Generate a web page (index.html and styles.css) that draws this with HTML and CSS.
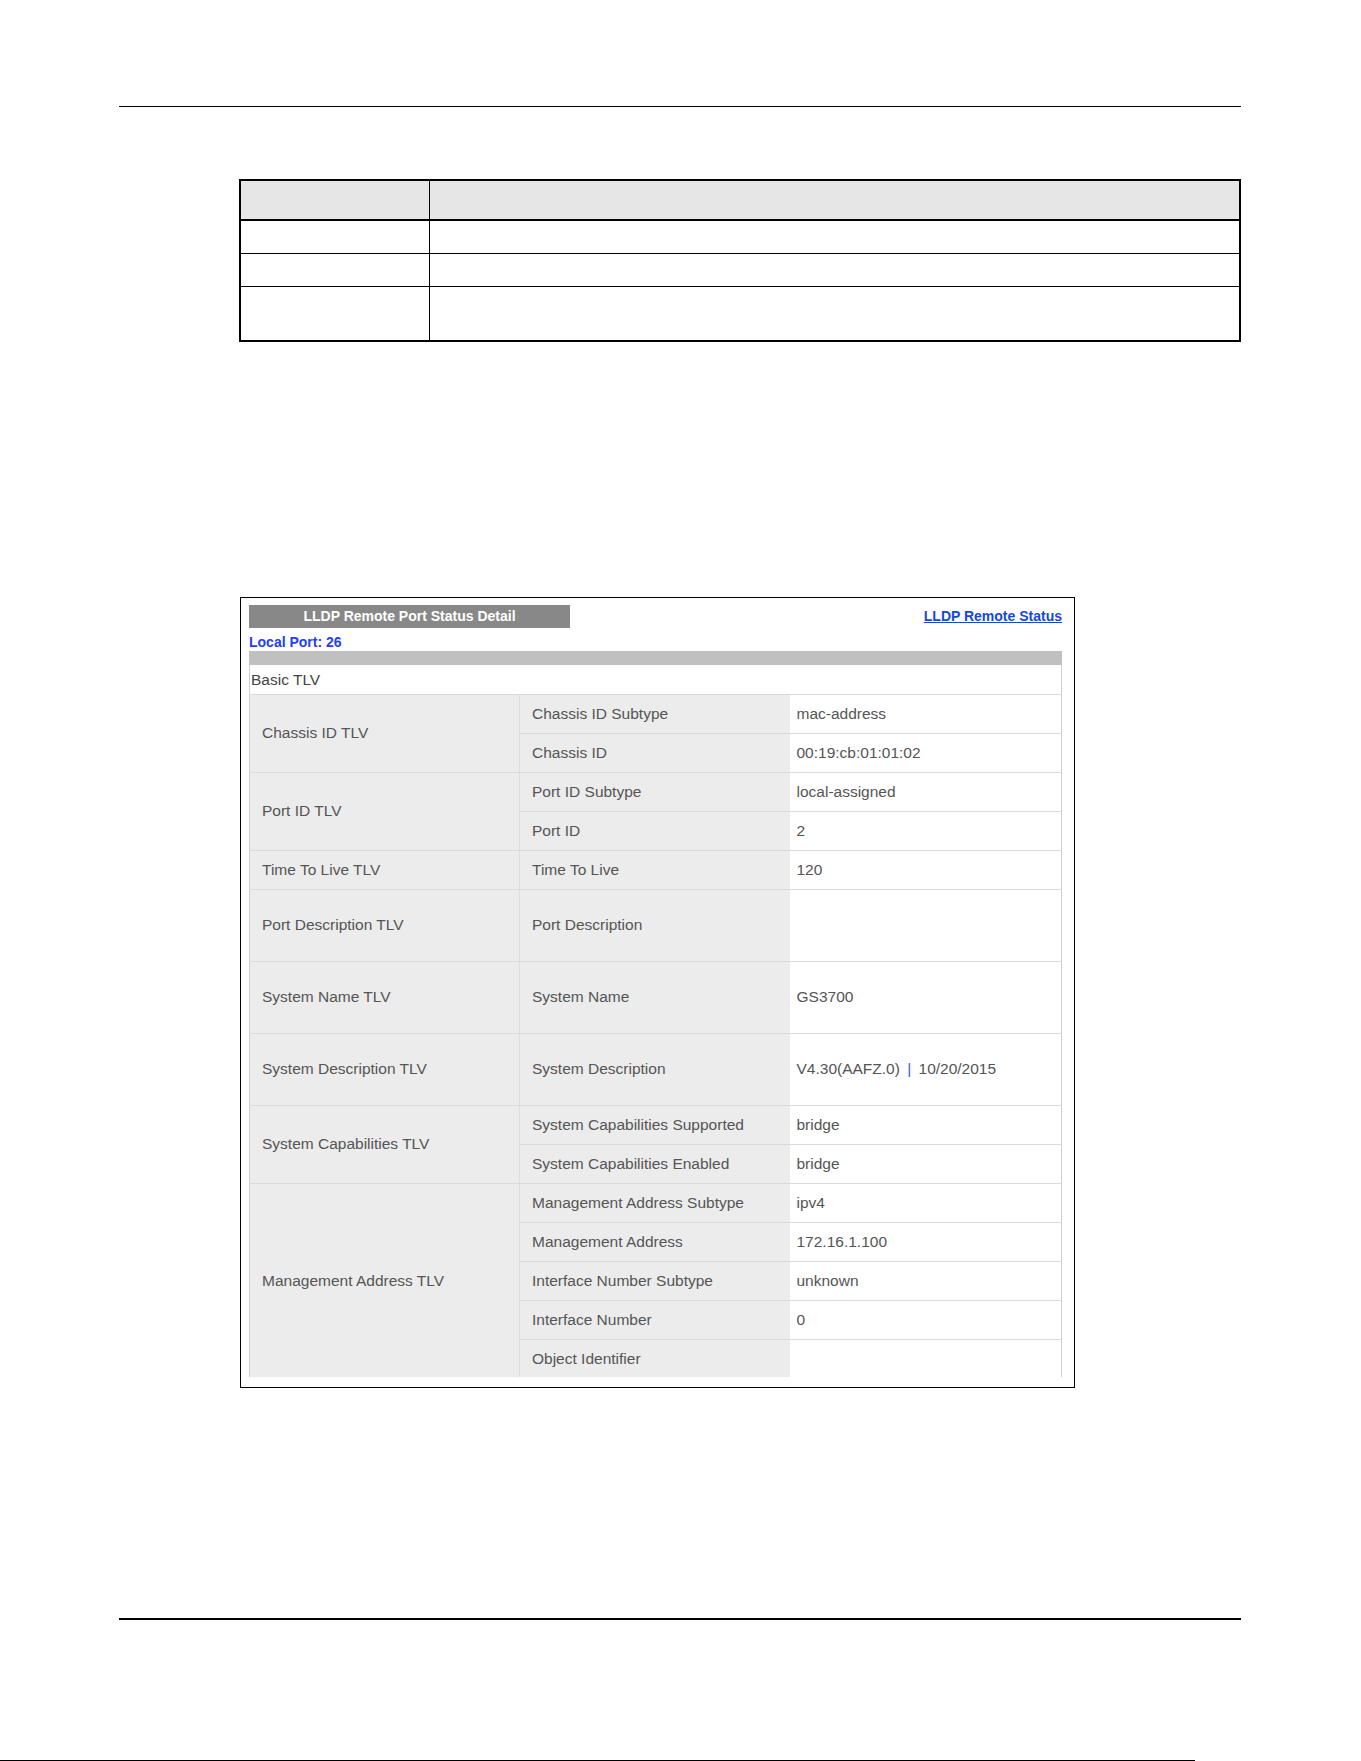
FILE: index.html
```html
<!DOCTYPE html>
<html lang="en">
<head>
    <meta charset="UTF-8">
    <meta name="viewport" content="width=device-width, initial-scale=1.0">
    <title>LLDP Remote Port Status Detail</title>
    <link rel="stylesheet" href="styles.css">
</head>
<body>
    <div class="page">
        <div class="rule rule-top"></div>

        <table class="desc">
            <thead>
                <tr><th class="desc-label"></th><th></th></tr>
            </thead>
            <tbody>
                <tr class="row-short"><td></td><td></td></tr>
                <tr class="row-short"><td></td><td></td></tr>
                <tr class="row-tall"><td></td><td></td></tr>
            </tbody>
        </table>

        <div class="shot">
            <div class="shot-head">
                <div class="title-bar">LLDP Remote Port Status Detail</div>
                <a class="back-link" href="#">LLDP Remote Status</a>
            </div>
            <div class="local-port">Local Port: 26</div>
            <div class="band"></div>

            <div class="tlv-wrap">
                <table class="tlv">
                    <colgroup>
                        <col class="col-group">
                        <col class="col-name">
                        <col>
                    </colgroup>
                    <tr class="tlv-title"><td colspan="3">Basic TLV</td></tr>

                    <tr><td class="grp" rowspan="2">Chassis ID TLV</td><td class="name">Chassis ID Subtype</td><td class="val">mac-address</td></tr>
                    <tr><td class="name">Chassis ID</td><td class="val">00:19:cb:01:01:02</td></tr>

                    <tr><td class="grp" rowspan="2">Port ID TLV</td><td class="name">Port ID Subtype</td><td class="val">local-assigned</td></tr>
                    <tr><td class="name">Port ID</td><td class="val">2</td></tr>

                    <tr><td class="grp">Time To Live TLV</td><td class="name">Time To Live</td><td class="val">120</td></tr>

                    <tr class="tall"><td class="grp">Port Description TLV</td><td class="name">Port Description</td><td class="val"></td></tr>
                    <tr class="tall"><td class="grp">System Name TLV</td><td class="name">System Name</td><td class="val">GS3700</td></tr>
                    <tr class="tall"><td class="grp">System Description TLV</td><td class="name">System Description</td><td class="val">V4.30(AAFZ.0) <span class="sep">|</span> 10/20/2015</td></tr>

                    <tr><td class="grp" rowspan="2">System Capabilities TLV</td><td class="name">System Capabilities Supported</td><td class="val">bridge</td></tr>
                    <tr><td class="name">System Capabilities Enabled</td><td class="val">bridge</td></tr>

                    <tr><td class="grp" rowspan="5">Management Address TLV</td><td class="name">Management Address Subtype</td><td class="val">ipv4</td></tr>
                    <tr><td class="name">Management Address</td><td class="val">172.16.1.100</td></tr>
                    <tr><td class="name">Interface Number Subtype</td><td class="val">unknown</td></tr>
                    <tr><td class="name">Interface Number</td><td class="val">0</td></tr>
                    <tr><td class="name">Object Identifier</td><td class="val"></td></tr>
                </table>
            </div>
        </div>

        <div class="rule rule-bottom"></div>

        <div class="foot-line"></div>
    </div>
</body>
</html>
```

FILE: styles.css
```css
* {
    margin: 0;
    padding: 0;
    box-sizing: border-box;
}

html, body {
    width: 100%;
    height: 100%;
    background: #fff;
    overflow: hidden;
}

body {
    font-family: "Liberation Sans", Arial, sans-serif;
    color: #000;
}

.page {
    position: relative;
    width: 1361px;
    height: 1761px;
    padding-top: 106px;
}

/* page rules */
.rule {
    background: #000;
    margin-left: 119px;
    width: 1122px;
}

.rule-top {
    height: 1px;
}

.rule-bottom {
    height: 2px;
    margin-top: 230px;
}

/* empty description table */
.desc {
    margin: 72px 0 0 239px;
    width: 1002px;
    border-collapse: collapse;
    border: 2px solid #000;
}

.desc th {
    height: 40px;
    background: #e6e6e6;
    border-bottom: 2px solid #000;
    border-right: 1px solid #000;
}

.desc td {
    border-top: 1px solid #000;
    border-right: 1px solid #000;
}

.desc .desc-label {
    width: 189px;
}

.desc .row-short td {
    height: 33px;
}

.desc .row-tall td {
    height: 55px;
}

/* web configurator screenshot */
.shot {
    margin: 255px 0 0 240px;
    width: 835px;
    height: 791px;
    border: 1px solid #000;
    padding: 7px 12px 0 8px;
    overflow: hidden;
}

.shot-head {
    display: flex;
    justify-content: space-between;
    align-items: center;
    height: 23px;
}

.title-bar {
    width: 321px;
    height: 23px;
    line-height: 23px;
    background: #888;
    color: #fff;
    font-size: 14px;
    font-weight: bold;
    text-align: center;
}

.back-link {
    color: #1b47d6;
    font-size: 14px;
    font-weight: bold;
    text-decoration: underline;
    margin-top: -1px;
}

.local-port {
    height: 23px;
    padding-top: 5px;
    line-height: 18px;
    color: #2340f5;
    font-size: 14px;
    font-weight: bold;
}

.band {
    height: 14px;
    background: #c0c0c0;
}

.tlv-wrap {
    height: 712px;
    overflow: hidden;
}

.tlv {
    width: 100%;
    border-collapse: collapse;
    border-left: 1px solid #cfcfcf;
    border-right: 1px solid #cfcfcf;
    font-size: 15.5px;
    color: #555;
}

.tlv .col-group,
.tlv .col-name {
    width: 270px;
}

.tlv td {
    height: 39px;
    vertical-align: middle;
    border-bottom: 1px solid #dadada;
    white-space: nowrap;
}

.tlv .tall td {
    height: 72px;
}

.tlv-title td {
    height: 29px;
    padding: 2px 0 0 1px;
    background: #fff;
    color: #444;
}

.tlv .grp {
    background: #ececec;
    padding-left: 12px;
    border-right: 1px solid #dedede;
}

.tlv .name {
    background: #ececec;
    padding-left: 12px;
}

.tlv .val {
    background: #fff;
    padding-left: 7px;
}

.sep {
    color: #3a5bd8;
    padding: 0 3px;
}

/* cut-off page footer line */
.foot-line {
    position: absolute;
    left: 0;
    top: 1760px;
    width: 1195px;
    height: 1px;
    background: #000;
}
```
